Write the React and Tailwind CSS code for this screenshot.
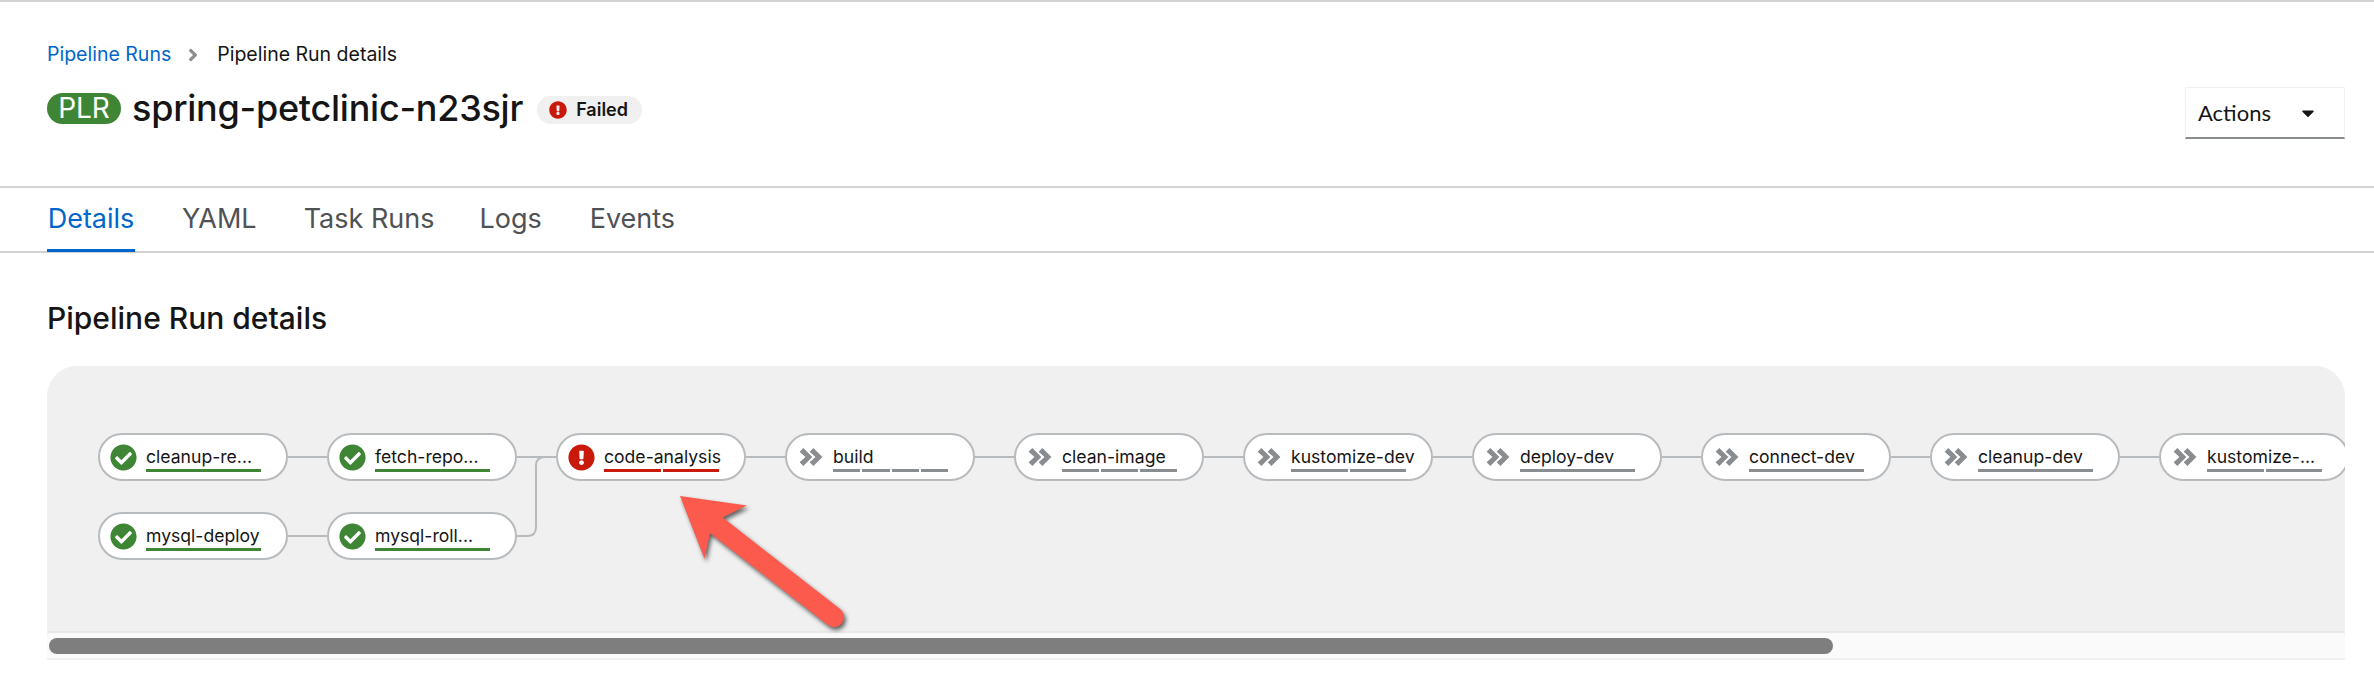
import React from "react";
import { FaCheckCircle, FaExclamationCircle, FaCaretDown, FaAngleRight } from "react-icons/fa";

const GREEN = "bg-[#3e8635]";
const RED = "bg-[#c9190b]";
const GRAY = "bg-[#8a8d90]";

function Chevrons() {
  return (
    <svg width="24" height="18" viewBox="0 0 21.5 17" className="ml-[2px] shrink-0 text-[#8a8d90]" fill="currentColor">
      <path d="M0 3.5 L3.5 0 L12 8.5 L3.5 17 L0 13.5 L5.5 8.5 Z" />
      <path d="M9.5 3.5 L13 0 L21.5 8.5 L13 17 L9.5 13.5 L15 8.5 Z" />
    </svg>
  );
}

function Pill({ label, status, segments }) {
  const bar = status === "ok" ? GREEN : status === "fail" ? RED : GRAY;
  return (
    <div className="relative flex h-[48px] w-[190px] shrink-0 items-center rounded-[24px] border-2 border-[#b8bbbe] bg-white pl-[10px]">
      <div className="flex w-[36px] shrink-0 items-center">
        {status === "ok" && <FaCheckCircle className="h-[27px] w-[27px] text-[#3e8635]" />}
        {status === "fail" && <FaExclamationCircle className="h-[27px] w-[27px] text-[#c9190b]" />}
        {status === "pending" && <Chevrons />}
      </div>
      <div className="flex w-[115px] flex-col pt-[2px]">
        <span className="whitespace-nowrap font-['Inter',sans-serif] text-[17.6px] leading-[24px] text-[#151515]">{label}</span>
        <div className="flex h-[3px] gap-[2px]">
          {Array.from({ length: segments }).map((_, i) => (
            <div key={i} className={`h-full flex-1 ${bar}`} />
          ))}
        </div>
      </div>
    </div>
  );
}

const Line = () => <div className="h-[2px] w-[39px] shrink-0 bg-[#b8bbbe]" />;

const top = [
  ["cleanup-re...", "ok", 1],
  ["fetch-repo...", "ok", 1],
  ["code-analysis", "fail", 2],
  ["build", "pending", 4],
  ["clean-image", "pending", 3],
  ["kustomize-dev", "pending", 2],
  ["deploy-dev", "pending", 1],
  ["connect-dev", "pending", 1],
  ["cleanup-dev", "pending", 1],
  ["kustomize-...", "pending", 2],
];

export default function App() {
  return (
    <div className="relative h-[678px] w-full overflow-hidden border-t-2 border-[#d2d2d2] bg-white font-['Inter',sans-serif] text-[#151515]">
      {/* Header */}
      <div className="flex h-[186px] items-start justify-between border-b-2 border-[#d2d2d2] pl-[47px] pr-[29px]">
        <div>
          <div className="flex items-center pt-[39px] text-[19.5px] leading-[27px]">
            <span className="text-[#0066cc]">Pipeline Runs</span>
            <FaAngleRight className="ml-[13px] mr-[15px] h-[20px] w-[18px] text-[#8a8d90]" />
            <span>Pipeline Run details</span>
          </div>
          <div className="mt-[18px] flex items-center">
            <span className="flex h-[31px] w-[74px] items-center justify-center rounded-[16px] bg-[#3e8635] text-[28px] text-white">PLR</span>
            <h1 className="ml-[11px] text-[36px] font-medium leading-[44px] tracking-[-0.25px]">spring-petclinic-n23sjr</h1>
            <span className="ml-[14px] mt-[3px] flex h-[28px] w-[105px] items-center rounded-[14px] bg-[#f0f0f0] pl-[12px]">
              <FaExclamationCircle className="h-[18px] w-[18px] text-[#c9190b]" />
              <span className="ml-[9px] text-[18px] font-semibold">Failed</span>
            </span>
          </div>
        </div>
        <div className="mt-[85px] flex h-[52px] w-[160px] items-center justify-between border border-b-2 border-[#f0f0f0] border-b-[#8a8d90] pl-[12px] pr-[29px] font-['Lato',sans-serif] text-[22px]">
          <span>Actions</span>
          <FaCaretDown className="h-[20px] w-[14px]" />
        </div>
      </div>

      {/* Tabs */}
      <div className="flex h-[65px] border-b-2 border-[#d2d2d2] pl-[47px] text-[27px] text-[#4f5255]">
        <div className="relative flex w-[88px] items-center justify-center whitespace-nowrap text-[#0066cc]">
          Details
          <div className="absolute bottom-[-1px] left-0 right-0 h-[3px] bg-[#0066cc]" />
        </div>
        <div className="ml-[47px] flex items-center">YAML</div>
        <div className="ml-[47px] flex items-center">Task Runs</div>
        <div className="ml-[45px] flex items-center">Logs</div>
        <div className="ml-[48px] flex items-center">Events</div>
      </div>

      {/* Section */}
      <div className="px-[29px] pl-[47px]">
        <h2 className="pt-[44px] text-[30px] font-medium leading-[42px]">Pipeline Run details</h2>
        <div className="mt-[27px] w-[2298px]">
          <div className="relative h-[265px] overflow-hidden rounded-t-[30px] bg-[#f0f0f0] pl-[51px] pt-[67px]">
            <div className="flex items-center">
              {top.map(([l, s, n], i) => (
                <React.Fragment key={l}>
                  {i > 0 && <Line />}
                  <Pill label={l} status={s} segments={n} />
                </React.Fragment>
              ))}
            </div>
            <div className="mt-[31px] flex items-center">
              <Pill label="mysql-deploy" status="ok" segments={1} />
              <Line />
              <Pill label="mysql-roll..." status="ok" segments={1} />
            </div>
            <svg className="absolute left-[470px] top-[90px]" width="40" height="90" fill="none" stroke="#b8bbbe" strokeWidth="2">
              <path d="M0 80 H10 Q19 80 19 71 V10 Q19 1 28 1 H39" />
            </svg>
          </div>
          <div className="h-[29px] border-y-2 border-t-[#e8e8e8] border-b-[#f0f0f0] bg-[#fafafa] px-[2px] pt-[5px]">
            <div className="h-[16px] w-[1784px] rounded-[8px] bg-[#7e7e7e]" />
          </div>
        </div>
      </div>

      {/* Annotation arrow */}
      <svg className="absolute left-[660px] top-[478px] drop-shadow-[2px_3px_2px_rgba(0,0,0,0.6)]" width="200" height="170" viewBox="660 480 200 170">
        <path d="M716 525 L834 617" stroke="#fd5a4e" strokeWidth="20" strokeLinecap="round" />
        <path d="M680 496 L747 505.5 L722.5 517.5 L710 533 L704.5 559 Z" fill="#fd5a4e" />
      </svg>
    </div>
  );
}
